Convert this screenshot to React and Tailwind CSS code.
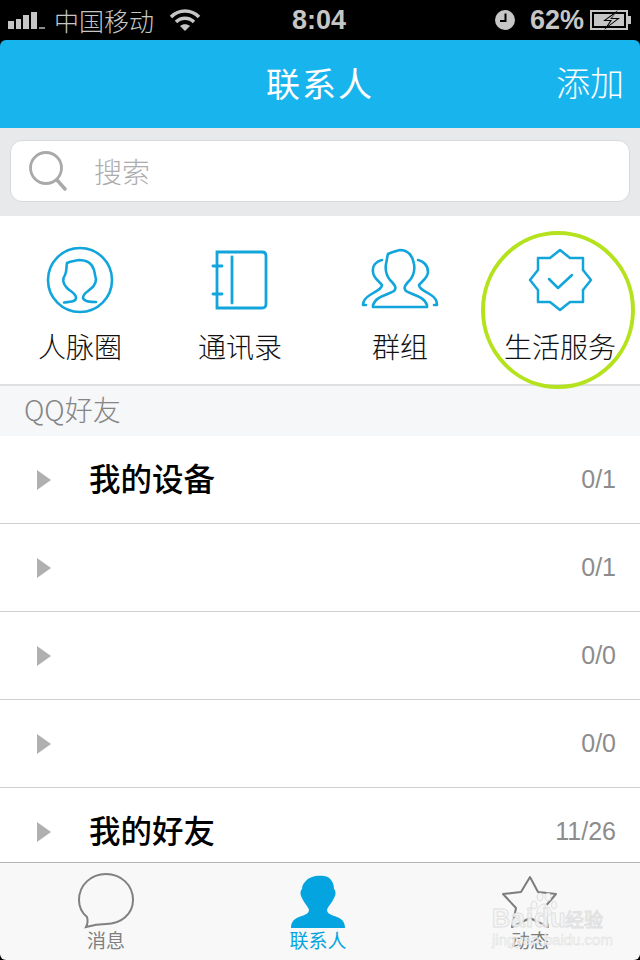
import React from "react";

const cjk = "font-['Noto_Sans_CJK_SC',sans-serif]";

const PersonRing = () => (
  <svg viewBox="40 240 80 80" className="w-[80px] h-[80px] text-[#12a5dc]" fill="none" stroke="currentColor" strokeWidth="2.6" strokeLinecap="round" strokeLinejoin="round">
    <circle cx="80" cy="280" r="32" />
    <path d="M64 302.500 C70 302 76 302 76 298 C76 293 71 292 67 288 C63 284 62 279 65 275 C67 271 66 268 67 263 C71 261 75 261 79 260 C86 260 92 263 94 270 C95 274 95 276 96 279 C96 285 92 288 88 291 C85 293 83 295 83 298 C84 302 91 302 96 302" />
  </svg>
);

const Notebook = () => (
  <svg viewBox="200 240 80 80" className="w-[80px] h-[80px] text-[#12a5dc]" fill="none" stroke="currentColor" strokeWidth="2.8" strokeLinecap="round" strokeLinejoin="miter">
    <path d="M217 252 H262 Q266 252 266 256 V304 Q266 308 262 308 H217 Z" />
    <path d="M232 257 V303" />
    <path d="M213 266 H222 M213 294 H222" />
  </svg>
);

const Group = () => (
  <svg viewBox="360 240 80 80" className="w-[80px] h-[80px] text-[#12a5dc]" fill="none" stroke="currentColor" strokeWidth="2.6" strokeLinecap="round" strokeLinejoin="round">
    <path d="M388 254 C392 252 396 251 400 250 C408 250 413 256 414 264 C415 270 414 275 410 280 C405 285 403 288 406 291 C412 295 424 296 427 305 L427 307 H373 L373 305 C376 296 388 295 394 291 C397 288 395 285 390 280 C386 275 385 270 386 264 C387 260 387 257 388 254 Z" />
    <path d="M382 260 C377 261 372 265 373 272 C373 278 380 282 382 285 C382 289 376 291 370 295 C365 298 363 302 363 305 L366 305" />
    <path d="M418 260 C423 261 428 265 428 272 C428 278 421 282 419 285 C419 289 425 291 431 295 C436 298 437 302 437 305 L434 305" />
  </svg>
);

const Badge = () => (
  <svg viewBox="520 240 80 80" className="w-[80px] h-[80px] text-[#12a5dc]" fill="none" stroke="currentColor" strokeWidth="2.5" strokeLinecap="round" strokeLinejoin="round">
    <path d="M560 250 L570 258 L583 258 L583 270 L591 280 L583 290 L583 302 L570 302 L560 310 L550 302 L538 302 L538 290 L530 280 L538 270 L538 258 L550 258 Z" />
    <path d="M549 279 L558 288 L572 275" />
  </svg>
);

const shortcuts = [
  { label: "人脉圈", icon: <PersonRing /> },
  { label: "通讯录", icon: <Notebook /> },
  { label: "群组", icon: <Group /> },
  { label: "生活服务", icon: <Badge /> },
];

const friends = [
  { name: "我的设备", count: "0/1" },
  { name: "", count: "0/1" },
  { name: "", count: "0/0" },
  { name: "", count: "0/0" },
  { name: "我的好友", count: "11/26" },
];

const StatusBar = () => (
  <div className="h-[40px] shrink-0 bg-black flex items-center px-[8px] text-[#c6c6c6]">
    <div className="flex items-end gap-[2px] w-[38px] h-[20px] pb-[1px]">
      <span className="w-[6px] h-[8px] bg-[#c6c6c6]" />
      <span className="w-[5px] h-[10px] bg-[#c6c6c6]" />
      <span className="w-[6px] h-[14px] bg-[#c6c6c6]" />
      <span className="w-[6px] h-[17px] bg-[#c6c6c6]" />
      <span className="w-[6px] h-[2px] bg-[#8a8a8a]" />
    </div>
    <span className="ml-[8px] text-[25px] leading-none font-['Noto_Sans_CJK_SC',sans-serif] font-light">中国移动</span>
    <svg viewBox="0 0 32 24" className="ml-[15px] w-[32px] h-[24px]" fill="none" stroke="currentColor" strokeWidth="3.6">
      <path d="M2 9 C10 1 22 1 30 9" />
      <path d="M7 14 C12 9 20 9 25 14" />
      <path d="M16 23 L11 18 C14 15.500 18 15.500 21 18 Z" fill="currentColor" stroke="none" />
    </svg>
    <span className="ml-[91px] text-[27px] leading-none font-bold font-['Liberation_Sans',sans-serif]">8:04</span>
    <div className="ml-auto flex items-center">
      <svg viewBox="0 0 20 20" className="w-[20px] h-[20px]">
        <circle cx="10" cy="10" r="10" fill="currentColor" />
        <path d="M10.500 3.500 V11 H5" fill="none" stroke="#000" strokeWidth="2" />
      </svg>
      <span className="ml-[15px] text-[27px] leading-none font-bold font-['Liberation_Sans',sans-serif]">62%</span>
      <svg viewBox="0 0 42 20" className="ml-[6px] w-[42px] h-[20px]">
        <rect x="1" y="1" width="36" height="18" fill="none" stroke="currentColor" strokeWidth="2" />
        <rect x="4" y="4" width="30" height="12" fill="currentColor" />
        <rect x="38" y="6" width="3" height="8" fill="currentColor" />
        <path d="M28 0 L13 11 H20 L14 20 L30 8 H22 Z" fill="#000" />
        <path d="M26 3 L16 10 H22 L18 16 L27 9 H20 Z" fill="currentColor" />
      </svg>
    </div>
  </div>
);

const Header = () => (
  <div className={`h-[88px] shrink-0 bg-[#18b4ed] rounded-t-[6px] grid grid-cols-[1fr_auto_1fr] items-center text-white ${cjk}`}>
    <span />
    <span className="text-[34px] leading-none pb-[2px] tracking-[2px]">联系人</span>
    <span className="text-[34px] leading-none font-light justify-self-end pr-[16px] pb-[4px]">添加</span>
  </div>
);

const SearchBar = () => (
  <div className="h-[88px] shrink-0 bg-[#e8e9eb] px-[10px] pt-[12px]">
    <div className="h-[62px] bg-white border border-[#d9d9d9] rounded-[12px] flex items-center pl-[18px]">
      <svg viewBox="0 0 38 40" className="w-[38px] h-[40px] text-[#a9a9a9]" fill="none" stroke="currentColor" strokeWidth="2.8" strokeLinecap="round">
        <circle cx="17" cy="17" r="15.500" />
        <path d="M28 29 L36 38" strokeWidth="3.400" />
      </svg>
      <span className={`ml-[27px] text-[28px] leading-none text-[#adadad] font-light ${cjk}`}>搜索</span>
    </div>
  </div>
);

const Shortcuts = () => (
  <div className="h-[170px] shrink-0 bg-white border-b-2 border-[#dedfe1] grid grid-cols-4 pt-[24px]">
    {shortcuts.map((s) => (
      <div key={s.label} className="flex flex-col items-center">
        {s.icon}
        <span className={`mt-[12px] text-[28px] leading-none font-light text-[#111111] whitespace-nowrap ${cjk}`}>{s.label}</span>
      </div>
    ))}
  </div>
);

const FriendRow = ({ name, count }) => (
  <div className="h-[88px] shrink-0 bg-white border-b border-[#cfcfcf] flex items-center pl-[37px] pr-[24px]">
    <span className="w-0 h-0 border-y-[10px] border-y-transparent border-l-[14px] border-l-[#b0b0b0]" />
    <span className={`ml-[38px] pb-[4px] text-[31.500px] leading-none font-medium text-black ${cjk}`}>{name}</span>
    <span className="ml-auto text-[25px] leading-none text-[#8c8c8c] font-['Liberation_Sans',sans-serif]">{count}</span>
  </div>
);

const TabBar = () => (
  <div className={`h-[98px] shrink-0 bg-[#f8f8f8] border-t border-[#b5b5b5] rounded-b-[6px] flex pr-[4px] ${cjk}`}>
    <div className="w-[212px] flex flex-col items-center pt-[10px] text-[#808080]">
      <svg viewBox="0 0 56 56" className="w-[56px] h-[56px]" fill="none" stroke="currentColor" strokeWidth="2">
        <path d="M8 54 C10 50 10 47 9 44 C3 39 1 34 1 27 C1 12 13 1 28 1 C43 1 55 12 55 27 C55 41 43 51 28 51 C21 51 15 52 8 54 Z" />
      </svg>
      <span className="mt-[1px] text-[19px] leading-none">消息</span>
    </div>
    <div className="w-[212px] flex flex-col items-center pt-[12px] text-[#04a4e0]">
      <svg viewBox="0 0 56 54" className="w-[56px] h-[54px]" fill="currentColor">
        <path d="M15 7 C19 1 28 0 34 1 C41 2 44 8 44 14 C46 16 46 20 44 23 C42 28 38 31 37 35 C37 39 42 40 47 42 C52 44 55 47 55 53 H1 C1 47 4 44 9 42 C14 40 19 39 19 35 C18 31 14 28 12 23 C10 20 10 16 12 14 C12 11 13 9 15 7 Z" />
      </svg>
      <span className="mt-[1px] text-[19px] leading-none">联系人</span>
    </div>
    <div className="w-[212px] flex flex-col items-center pt-[12px] text-[#7c7c7c]">
      <svg viewBox="0 0 56 54" className="w-[56px] h-[54px]" fill="none" stroke="currentColor" strokeWidth="2" strokeLinejoin="round">
        <path d="M28 2 L36 17 L54 19 L42 33 L46 52 L28 43 L10 52 L14 33 L1 19 L19 17 Z" />
      </svg>
      <span className="mt-[1px] text-[19px] leading-none">动态</span>
    </div>
  </div>
);

export default function App() {
  return (
    <div className="relative w-[640px] h-[960px] bg-black overflow-hidden flex flex-col">
      <StatusBar />
      <Header />
      <SearchBar />
      <Shortcuts />
      <div className={`h-[50px] shrink-0 bg-[#f6f7f9] flex items-center pl-[24px] pb-[4px] text-[28px] leading-none font-light text-[#858585] ${cjk}`}>
        QQ好友
      </div>
      <div className="flex-1 min-h-0 overflow-hidden flex flex-col bg-white">
        {friends.map((f, i) => (
          <FriendRow key={i} name={f.name} count={f.count} />
        ))}
      </div>
      <TabBar />

      {/* hand drawn ring on top of the screenshot */}
      <svg viewBox="0 0 156 160" className="absolute left-[480px] top-[230px] w-[156px] h-[160px] pointer-events-none">
        <ellipse cx="78" cy="80" rx="75" ry="77" fill="none" stroke="#b4e31e" strokeWidth="4" />
      </svg>

      {/* baidu watermark */}
      <svg viewBox="0 0 28 26" className="absolute left-[529px] top-[892px] w-[28px] h-[26px] text-[#f6f6f6] opacity-90 pointer-events-none" fill="currentColor" stroke="#dedede" strokeWidth="1">
        <ellipse cx="5" cy="13" rx="3" ry="4" />
        <ellipse cx="11" cy="5" rx="3" ry="4" />
        <ellipse cx="19" cy="5" rx="3" ry="4" />
        <ellipse cx="25" cy="13" rx="2.500" ry="4" />
        <path d="M15 12 C19 12 23 18 22 22 C20 25 10 25 8 22 C7 18 11 12 15 12 Z" />
      </svg>
      <div className={`absolute left-[492px] top-[906px] flex items-center text-[#f6f6f6] opacity-90 pointer-events-none [-webkit-text-stroke:1px_#dedede] ${cjk}`}>
        <span className="w-[73px] text-[25px] leading-none font-bold font-['Liberation_Sans',sans-serif] tracking-[1px]">Baidu</span>
        <span className="text-[19px] leading-none">经验</span>
      </div>
      <span className="absolute left-[492px] top-[932px] text-[15px] leading-none text-[#f6f6f6] opacity-90 [-webkit-text-stroke:0.5px_#dedede] font-['Liberation_Sans',sans-serif] pointer-events-none">jingyan.baidu.com</span>
    </div>
  );
}
